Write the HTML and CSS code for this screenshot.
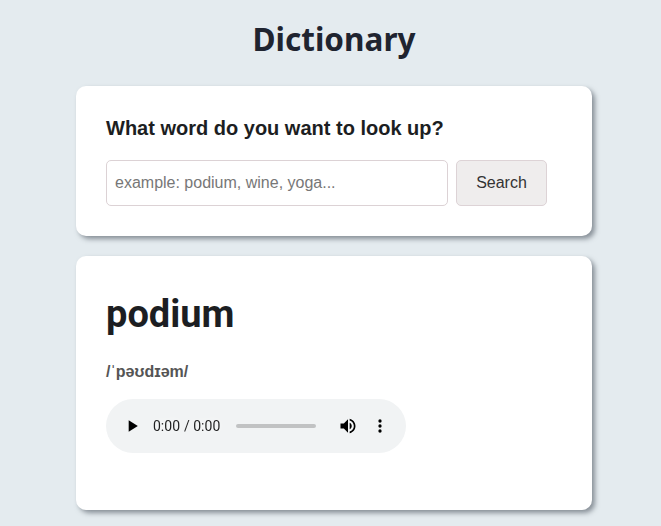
FILE: index.html
```html
<!DOCTYPE html>
<html lang="en">
<head>
<meta charset="utf-8">
<title>Dictionary</title>
<link rel="stylesheet" href="styles.css">
</head>
<body>
<div class="app">
  <h1 class="title">Dictionary</h1>
  <section class="card search-card">
    <h3 class="question">What word do you want to look up?</h3>
    <form class="search-form">
      <input class="search-input" type="search" placeholder="example: podium, wine, yoga...">
      <button class="search-button" type="button">Search</button>
    </form>
  </section>
  <section class="card result-card">
    <h2 class="word">podium</h2>
    <p class="phonetic">/ˈpəʊdɪəm/</p>
    <audio class="player" controls preload="auto" src="data:audio/wav;base64,UklGRiQAAABXQVZFZm10IBAAAAABAAEAQB8AAEAfAAABAAgAZGF0YQAAAAA="></audio>
  </section>
</div>
</body>
</html>
```
FILE: styles.css
```css
html, body {
  margin: 0;
  padding: 0;
}
body {
  background: #e4ebef;
  font-family: "Liberation Sans", Arial, sans-serif;
  color: #222;
}
.app {
  width: 516px;
  margin: 0 auto;
  padding: 18px 0 20px 7px;
  display: flex;
  flex-direction: column;
  gap: 20px;
}
.title {
  margin: 0 0 6px;
  text-align: center;
  font-family: "Comic Sans MS", "Noto Sans", sans-serif;
  font-size: 31.5px;
  font-weight: 700;
  color: #1f2430;
  line-height: 42px;
}
.card {
  background: #fff;
  border-radius: 10px;
  box-shadow: 3px 3px 5px rgba(60, 70, 80, 0.55);
  padding: 30px;
}
.search-card {
  padding-top: 31px;
}
.question {
  margin: 0 0 20px;
  font-size: 20px;
  line-height: 23px;
  font-weight: 700;
  color: #1c1e22;
}
.search-form {
  display: flex;
  gap: 8px;
}
.search-input {
  width: 342px;
  height: 46px;
  box-sizing: border-box;
  border: 1px solid #dcd2d5;
  border-radius: 5px;
  padding: 0 8px;
  font-family: "Liberation Sans", Arial, sans-serif;
  font-size: 16px;
  color: #333;
  outline: none;
}
.search-input::placeholder {
  color: #777;
}
.search-button {
  width: 91px;
  height: 46px;
  box-sizing: border-box;
  border: 1px solid #ddd3d6;
  border-radius: 5px;
  background: #efeded;
  font-family: "Liberation Sans", Arial, sans-serif;
  font-size: 16px;
  color: #333;
}
.result-card {
  padding-bottom: 57px;
}
.word {
  margin: 5px 0 0;
  font-family: Roboto, "Liberation Sans", sans-serif;
  font-size: 38px;
  line-height: 46px;
  font-weight: 700;
  color: #1c1e22;
}
.phonetic {
  margin: 26px 0 18px;
  font-size: 16px;
  line-height: 18px;
  font-weight: 700;
  color: #555;
}
.player {
  display: block;
  width: 300px;
  height: 54px;
}
.player::-webkit-media-controls-timeline {
  filter: brightness(0.45);
}
```
